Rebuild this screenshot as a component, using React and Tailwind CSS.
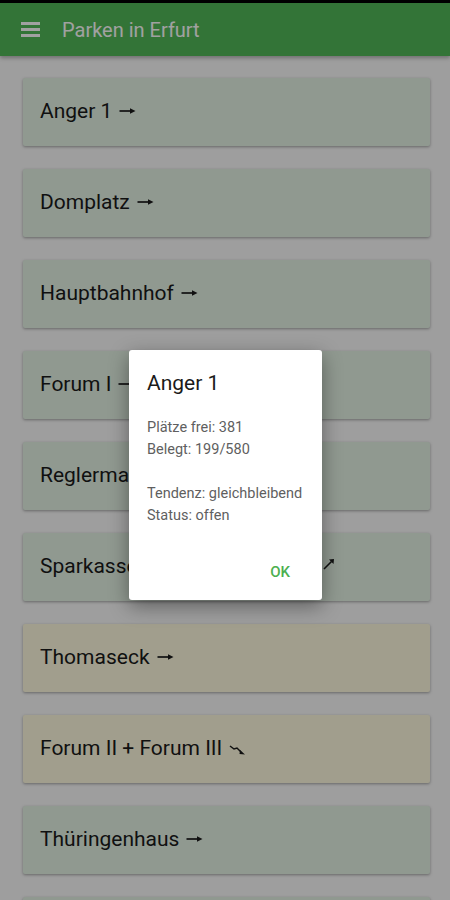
import React from "react";

function ArrowRight() {
  return (
    <svg width="17" height="10" viewBox="0 0 17 10" className="inline-block ml-[7px] align-middle relative top-[-1px]">
      <line x1="0.5" y1="5" x2="12" y2="5" stroke="#1a1a1a" strokeWidth="1.7" />
      <polygon points="11,2.2 16.5,5 11,7.8" fill="#1a1a1a" />
    </svg>
  );
}

function ArrowUpRight() {
  return (
    <svg width="12" height="12" viewBox="0 0 12 12" className="inline-block ml-[7px] align-middle relative top-[-3px]">
      <line x1="1" y1="11" x2="8.5" y2="3.5" stroke="#1a1a1a" strokeWidth="1.6" />
      <polygon points="6,1.5 11,1 10.5,6" fill="#1a1a1a" />
    </svg>
  );
}

function ArrowDownZig() {
  return (
    <svg width="18" height="12" viewBox="0 0 18 12" className="inline-block ml-[7px] align-middle relative top-[1px]">
      <polyline points="1,2 5,5 8,4 12,8" fill="none" stroke="#1a1a1a" strokeWidth="1.5" />
      <polygon points="11,6 16,10.5 10.5,10" fill="#1a1a1a" />
    </svg>
  );
}

const items = [
  { name: "Anger 1", arrow: "r", tone: "g" },
  { name: "Domplatz", arrow: "r", tone: "g" },
  { name: "Hauptbahnhof", arrow: "r", tone: "g" },
  { name: "Forum I", arrow: "r", tone: "g" },
  { name: "Reglermarkt", arrow: "r", tone: "g" },
  { name: "Sparkassen-Finanzzentrum", arrow: "u", tone: "g", wide: true },
  { name: "Thomaseck", arrow: "r", tone: "y" },
  { name: "Forum II + Forum III", arrow: "d", tone: "y" },
  { name: "Thüringenhaus", arrow: "r", tone: "g" },
  { name: "Rathaus", arrow: "r", tone: "g" },
];

export default function App() {
  return (
    <div
      className="relative h-[900px] w-[450px] overflow-hidden bg-[#fafafa]"
      style={{ fontFamily: "Roboto, 'Noto Sans', sans-serif" }}
    >
      <div className="h-[3px] bg-black" />
      <header className="flex h-[53px] items-center bg-[#52b857] shadow-[0_2px_4px_rgba(0,0,0,0.3)]">
        <div className="ml-[21px] flex w-[19px] flex-col gap-[3.5px]">
          <span className="block h-[2.5px] bg-white" />
          <span className="block h-[2.5px] bg-white" />
          <span className="block h-[2.5px] bg-white" />
        </div>
        <h1 className="ml-[22px] text-[20px] font-normal text-white">Parken in Erfurt</h1>
      </header>
      <main className="flex flex-col gap-[23px] pl-[23px] pr-[20px] pt-[22px]">
        {items.map((it) => (
          <div
            key={it.name}
            className={`flex h-[68px] shrink-0 items-center rounded-[2px] pl-[17px] text-[21px] text-[#1a1a1a] shadow-[0_1px_3px_rgba(0,0,0,0.35)] ${
              it.tone === "g" ? "bg-[#e4f2e5]" : "bg-[#fffbe0]"
            }`}
          >
            <span className={`whitespace-nowrap ${it.wide ? "w-[276px]" : ""}`}>{it.name}</span>
            {it.arrow === "r" && <ArrowRight />}
            {it.arrow === "u" && <ArrowUpRight />}
            {it.arrow === "d" && <ArrowDownZig />}
          </div>
        ))}
      </main>

      <div className="absolute inset-0 bg-black/[0.37]" />

      <div className="absolute left-[129px] top-[350px] flex h-[250px] w-[193px] flex-col rounded-[3px] bg-white shadow-[0_6px_20px_rgba(0,0,0,0.4)]">
        <div className="px-[18px] pt-[21px] text-[21px] leading-[24px] text-[#1a1a1a]">Anger 1</div>
        <div className="mt-[22px] whitespace-nowrap px-[18px] text-[14.5px] leading-[22px] text-[#5f5f5f]">
          <div>Plätze frei: 381</div>
          <div>Belegt: 199/580</div>
          <div>&nbsp;</div>
          <div>Tendenz: gleichbleibend</div>
          <div>Status: offen</div>
        </div>
        <div className="mt-auto flex justify-end pb-[10px] pr-[24px]">
          <button className="h-[36px] px-[8px] text-[15px] font-medium text-[#4caf50]">OK</button>
        </div>
      </div>
    </div>
  );
}
